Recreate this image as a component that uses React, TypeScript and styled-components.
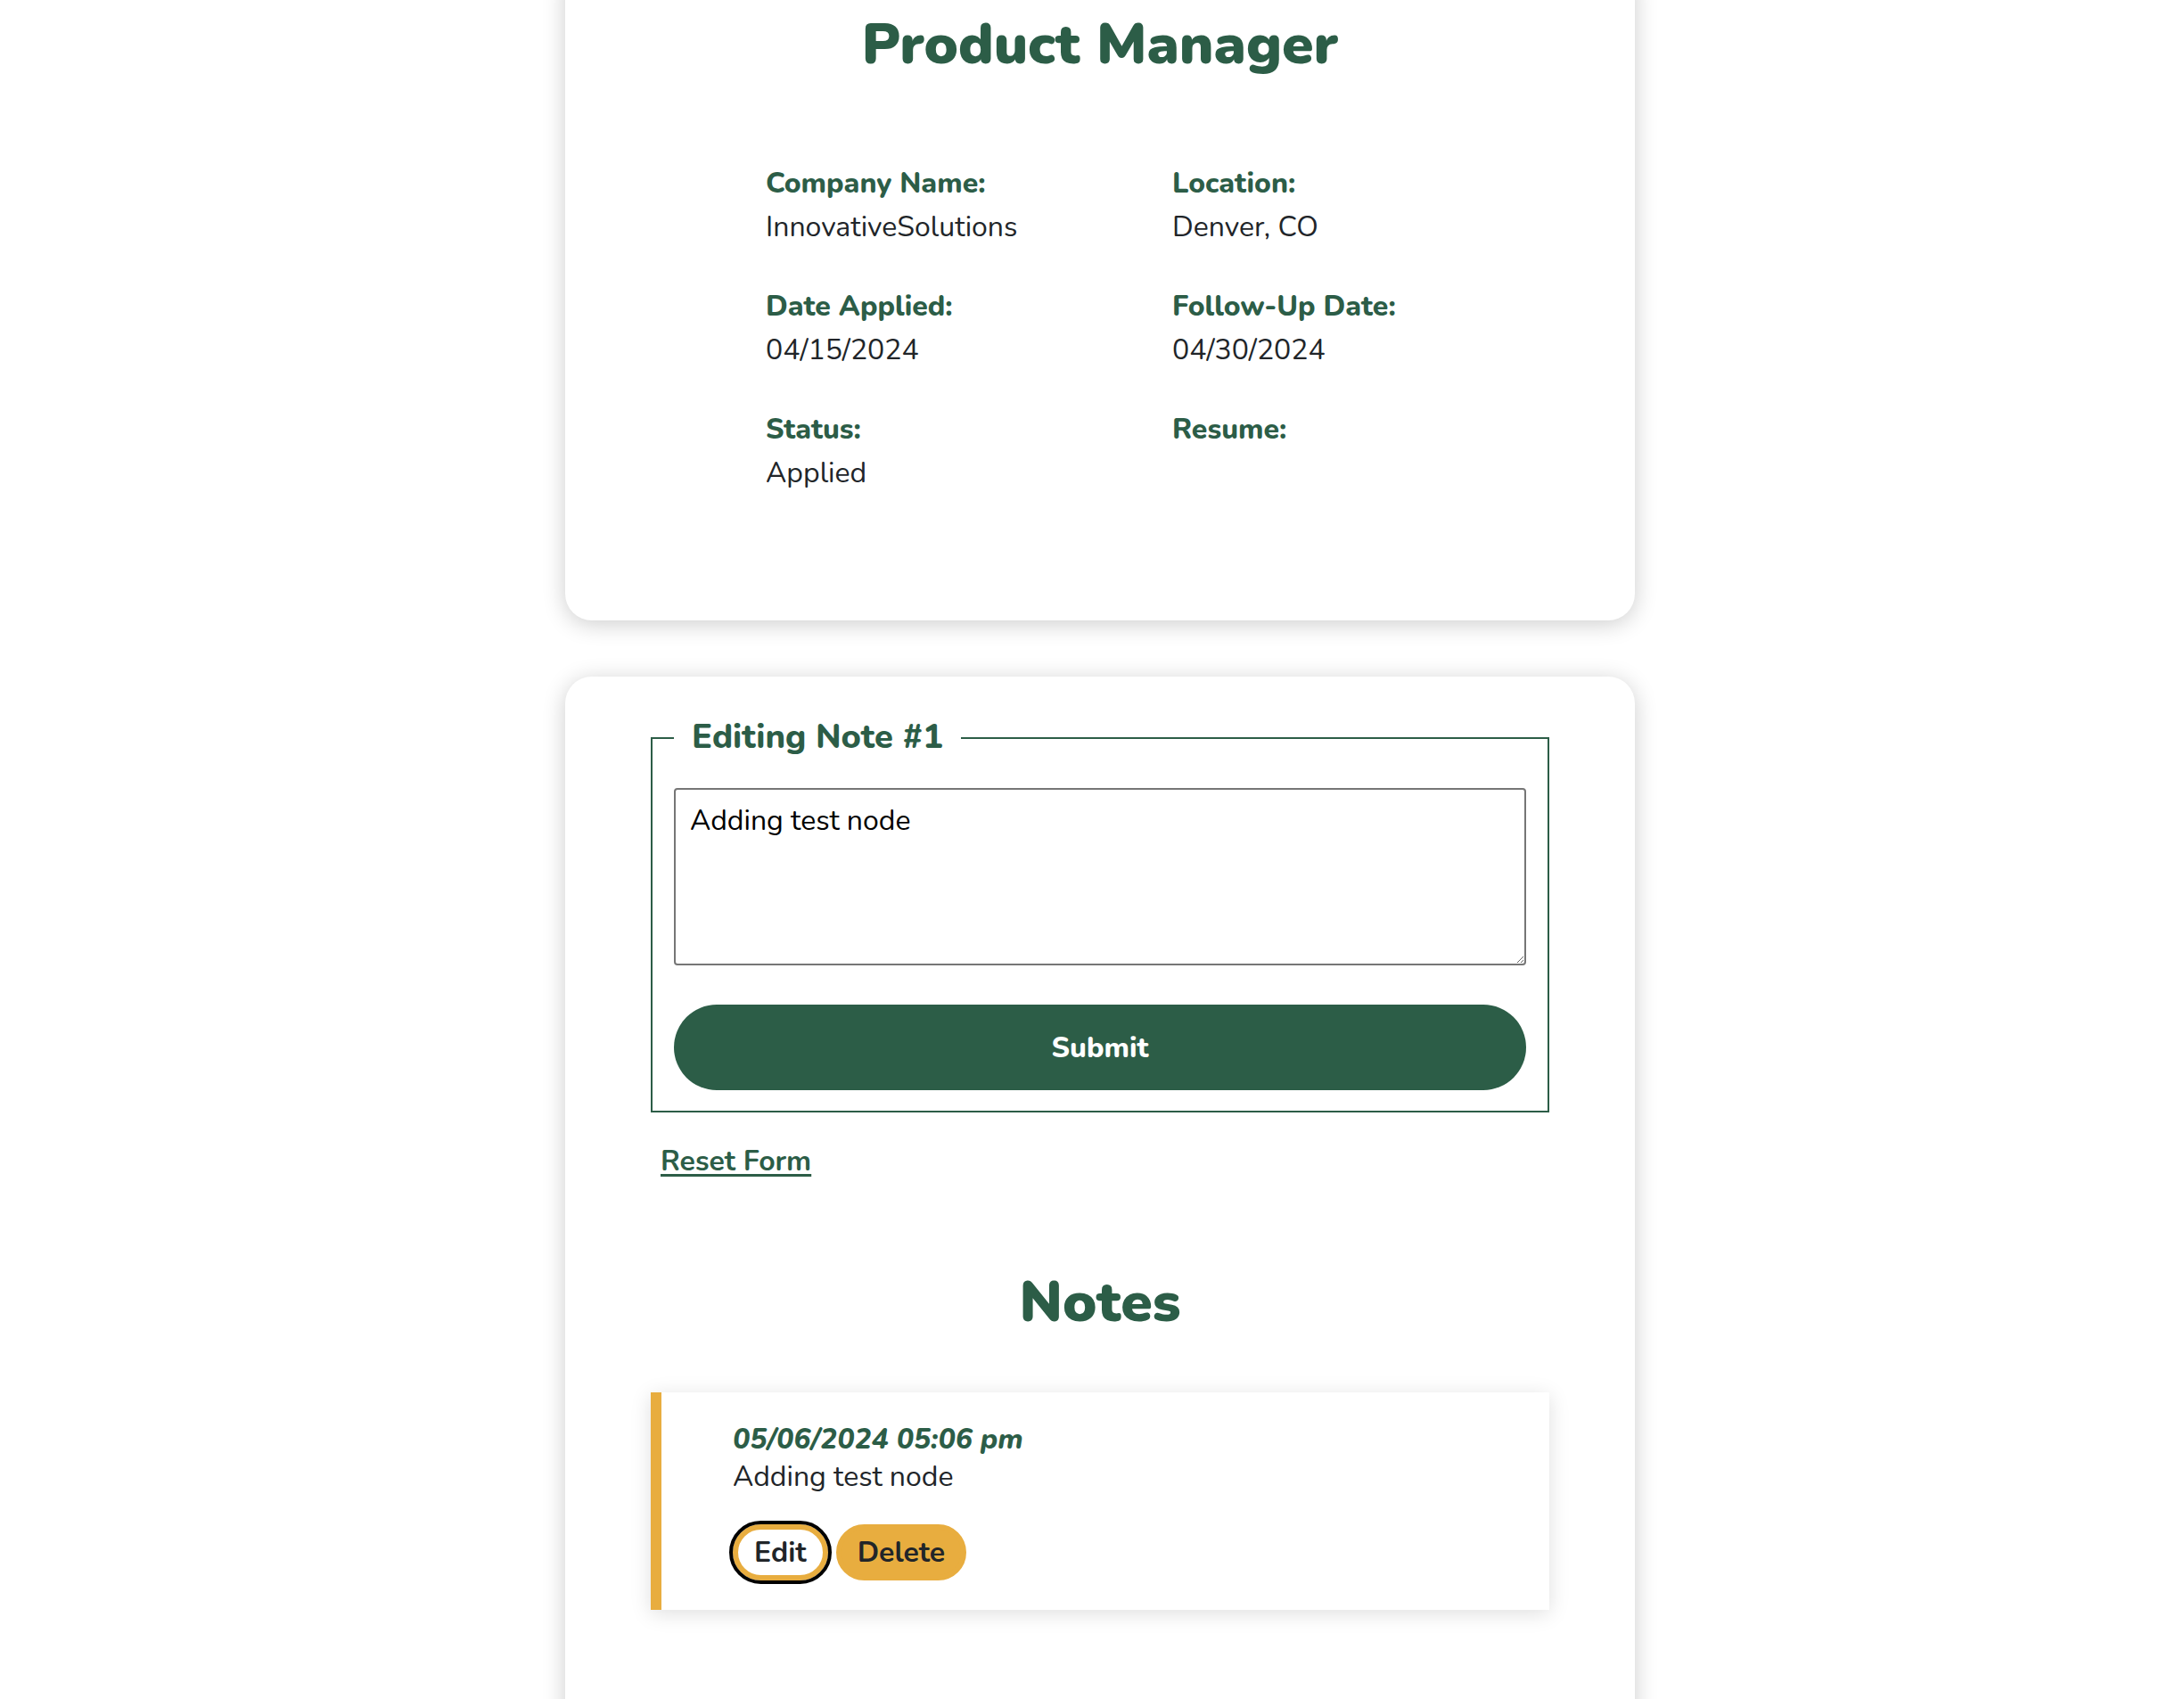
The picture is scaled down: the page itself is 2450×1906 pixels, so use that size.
import styled, { createGlobalStyle } from 'styled-components';

const GREEN = '#2c5d47';
const YELLOW = '#e8ad3f';
const INK = '#212529';

const GlobalStyle = createGlobalStyle`
  * {
    box-sizing: border-box;
  }

  body {
    margin: 0;
    background: #ffffff;
    font-family: 'Nunito', 'Lato', 'Open Sans', sans-serif;
    color: ${INK};
    overflow: hidden;
  }
`;

interface Detail {
  label: string;
  value: string;
}

const details: Detail[] = [
  { label: 'Company Name:', value: 'InnovativeSolutions' },
  { label: 'Location:', value: 'Denver, CO' },
  { label: 'Date Applied:', value: '04/15/2024' },
  { label: 'Follow-Up Date:', value: '04/30/2024' },
  { label: 'Status:', value: 'Applied' },
  { label: 'Resume:', value: '' },
];

const notes = [{ id: 1, date: '05/06/2024 05:06 pm', text: 'Adding test node' }];

export default function App() {
  return (
    <>
      <GlobalStyle />
      <Page>
        <JobCard>
          <Heading>Product Manager</Heading>
          <DetailGrid>
            {details.map((item) => (
              <DetailItem key={item.label}>
                <DetailLabel>{item.label}</DetailLabel>
                <DetailValue>{item.value}</DetailValue>
              </DetailItem>
            ))}
          </DetailGrid>
        </JobCard>

        <NotesCard>
          <Section>
            <NoteForm onSubmit={(e) => e.preventDefault()}>
              <Legend>Editing Note #1</Legend>
              <NoteInput defaultValue="Adding test node" />
              <SubmitButton type="submit">Submit</SubmitButton>
            </NoteForm>
            <ResetLink href="#">Reset Form</ResetLink>
          </Section>

          <NotesHeading>Notes</NotesHeading>

          <Section>
            {notes.map((note) => (
              <NoteItem key={note.id}>
                <NoteDate>{note.date}</NoteDate>
                <NoteText>{note.text}</NoteText>
                <NoteActions>
                  <PillButton type="button" $outlined>
                    Edit
                  </PillButton>
                  <PillButton type="button">Delete</PillButton>
                </NoteActions>
              </NoteItem>
            ))}
          </Section>
        </NotesCard>
      </Page>
    </>
  );
}

const Page = styled.div`
  display: flex;
  flex-direction: column;
  align-items: center;
  gap: 63px;
  padding-left: 18px;
`;

const Card = styled.div`
  width: 1200px;
  background: #ffffff;
  border-radius: 30px;
  box-shadow: 0 4px 26px rgba(0, 0, 0, 0.2);
`;

const JobCard = styled(Card)`
  margin-top: -40px;
  padding: 52px 0 143px 225px;
`;

const Heading = styled.h1`
  margin: 0 0 95px -225px;
  font-size: 64px;
  line-height: 77px;
  font-weight: 900;
  color: ${GREEN};
  text-align: center;
`;

const DetailGrid = styled.div`
  display: grid;
  grid-template-columns: 456px 456px;
  row-gap: 45px;
`;

const DetailItem = styled.div`
  display: flex;
  flex-direction: column;
  gap: 5px;
`;

const DetailLabel = styled.span`
  font-size: 32px;
  line-height: 44px;
  font-weight: 800;
  color: ${GREEN};
`;

const DetailValue = styled.span`
  min-height: 44px;
  font-size: 32px;
  line-height: 44px;
  color: ${INK};
`;

const NotesCard = styled(Card)`
  padding: 68px 96px 160px;
`;

const Section = styled.div`
  display: flex;
  flex-direction: column;
  align-items: flex-start;
`;

const NoteForm = styled.form`
  width: 100%;
  border: 2px solid ${GREEN};
  padding: 0 24px 23px;
  margin: 0;
`;

const Legend = styled.div`
  display: table;
  margin: -24px 0 35px;
  padding: 0 20px;
  background: #ffffff;
  font-size: 38px;
  line-height: 44px;
  font-weight: 800;
  color: ${GREEN};
`;

const NoteInput = styled.textarea`
  display: block;
  width: 100%;
  height: 199px;
  padding: 13px 16px 11px;
  border: 2px solid #767676;
  border-radius: 4px;
  font-family: inherit;
  font-size: 32px;
  line-height: 44px;
  color: #000000;
  resize: vertical;
`;

const SubmitButton = styled.button`
  display: block;
  width: 100%;
  height: 96px;
  margin-top: 44px;
  border: none;
  border-radius: 48px;
  background: ${GREEN};
  color: #ffffff;
  font-family: inherit;
  font-size: 32px;
  font-weight: 800;
  cursor: pointer;
`;

const ResetLink = styled.a`
  margin: 33px 0 0 11px;
  font-size: 32px;
  line-height: 44px;
  font-weight: 700;
  color: ${GREEN};
  text-decoration: underline;
  text-decoration-thickness: 3px;
  text-underline-offset: 4px;
`;

const NotesHeading = styled.h2`
  margin: 98px 0 62px;
  font-size: 64px;
  line-height: 77px;
  font-weight: 900;
  color: ${GREEN};
  text-align: center;
`;

const NoteItem = styled.div`
  width: 100%;
  padding: 31px 40px 33px 80px;
  border-left: 12px solid ${YELLOW};
  background: #ffffff;
  box-shadow: 0 4px 22px rgba(0, 0, 0, 0.13);
`;

const NoteDate = styled.div`
  font-size: 32px;
  line-height: 43px;
  font-weight: 800;
  font-style: italic;
  color: ${GREEN};
`;

const NoteText = styled.div`
  font-size: 32px;
  line-height: 42px;
  color: ${INK};
`;

const NoteActions = styled.div`
  display: flex;
  gap: 9px;
  margin-top: 32px;
`;

const PillButton = styled.button<{ $outlined?: boolean }>`
  height: 63px;
  padding: 0 18px;
  border: 6px solid ${YELLOW};
  border-radius: 32px;
  background: ${(props) => (props.$outlined ? '#ffffff' : YELLOW)};
  outline: ${(props) => (props.$outlined ? '4px solid #000000' : 'none')};
  color: ${INK};
  font-family: inherit;
  font-size: 32px;
  line-height: 51px;
  font-weight: 700;
  cursor: pointer;
`;
